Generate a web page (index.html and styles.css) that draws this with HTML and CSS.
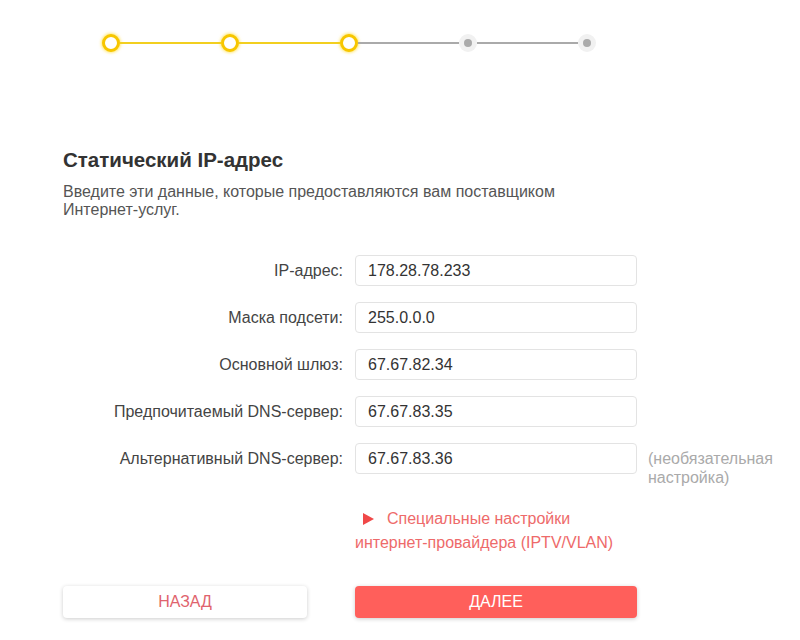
FILE: index.html
```html
<!DOCTYPE html>
<html lang="ru">
<head>
	<meta charset="UTF-8">
	<title>Статический IP-адрес</title>
	<link rel="stylesheet" href="styles.css">
</head>
<body>
	<div class="steps">
		<span class="step done"></span>
		<span class="line done"></span>
		<span class="step done"></span>
		<span class="line done"></span>
		<span class="step done"></span>
		<span class="line"></span>
		<span class="step"></span>
		<span class="line"></span>
		<span class="step"></span>
	</div>

	<div class="panel">
		<h2 class="title">Статический IP-адрес</h2>
		<p class="desc">Введите эти данные, которые предоставляются вам поставщиком<br>Интернет-услуг.</p>

		<div class="form">
			<label class="lbl">IP-адрес:</label>
			<div class="field">178.28.78.233</div>
			<span class="hint"></span>

			<label class="lbl">Маска подсети:</label>
			<div class="field">255.0.0.0</div>
			<span class="hint"></span>

			<label class="lbl">Основной шлюз:</label>
			<div class="field">67.67.82.34</div>
			<span class="hint"></span>

			<label class="lbl">Предпочитаемый DNS-сервер:</label>
			<div class="field">67.67.83.35</div>
			<span class="hint"></span>

			<label class="lbl">Альтернативный DNS-сервер:</label>
			<div class="field">67.67.83.36</div>
			<span class="hint">(необязательная настройка)</span>

			<span></span>
			<a class="adv" href="#"><span class="tri"></span>Специальные настройки интернет-провайдера (IPTV/VLAN)</a>
			<span></span>
		</div>

		<div class="btns">
			<a class="btn back" href="#">НАЗАД</a>
			<a class="btn next" href="#">ДАЛЕЕ</a>
		</div>
	</div>
</body>
</html>
```

FILE: styles.css
```css
*{
	margin: 0;
	padding: 0;
	box-sizing: border-box;
	text-decoration: none;
}
body{
	font-family: "Liberation Sans", Arial, sans-serif;
	color: #333;
	background: #fff;
	width: 800px;
	height: 640px;
	overflow: hidden;
}
.steps{
	display: flex;
	align-items: center;
	padding: 34px 0 0 102px;
	height: 52px;
}
.step{
	flex: none;
	width: 18px;
	height: 18px;
	border-radius: 50%;
	background: #f1f1f1;
	display: flex;
	align-items: center;
	justify-content: center;
}
.step::after{
	content: "";
	width: 8px;
	height: 8px;
	border-radius: 50%;
	background: #aaa;
}
.step.done{
	background: #fff;
	border: 3px solid #f7c600;
	box-shadow: 0 0 3px 1px rgba(255, 214, 0, 0.55);
}
.step.done::after{
	display: none;
}
.line{
	flex: none;
	width: 101px;
	height: 2px;
	background: #aaa;
}
.line.done{
	background: #f2cf1f;
}
.panel{
	padding: 96px 0 0 63px;
}
.title{
	font-size: 20.5px;
	font-weight: bold;
	color: #333;
	line-height: 24px;
}
.desc{
	margin-top: 11px;
	font-size: 16px;
	line-height: 18px;
	color: #555;
}
.form{
	margin-top: 36px;
	display: grid;
	grid-template-columns: 280px 282px 150px;
	column-gap: 12px;
	row-gap: 16px;
	align-items: start;
}
.lbl{
	text-align: right;
	font-size: 16px;
	line-height: 31px;
	color: #444;
}
.field{
	height: 31px;
	border: 1px solid #e3e3e3;
	border-radius: 4px;
	padding-left: 12px;
	font-size: 16px;
	line-height: 29px;
	color: #333;
}
.hint{
	font-size: 16px;
	line-height: 19px;
	color: #aaa;
	padding-top: 6px;
	margin-left: -1px;
}
.adv{
	margin-top: 4px;
	font-size: 16px;
	line-height: 24px;
	color: #ee6a6a;
}
.tri{
	display: inline-block;
	width: 0;
	height: 0;
	border-top: 6px solid transparent;
	border-bottom: 6px solid transparent;
	border-left: 11px solid #f04848;
	margin: 0 13px 0 8px;
	vertical-align: -1px;
}
.btns{
	margin-top: 31px;
	display: flex;
	gap: 48px;
}
.btn{
	display: block;
	height: 32px;
	border-radius: 4px;
	text-align: center;
	font-size: 16px;
	line-height: 32px;
	box-shadow: 0 1px 4px rgba(0, 0, 0, 0.2);
}
.back{
	width: 244px;
	background: #fff;
	color: #e0636d;
}
.next{
	width: 282px;
	background: #ff5f5b;
	color: #fff;
}
```
